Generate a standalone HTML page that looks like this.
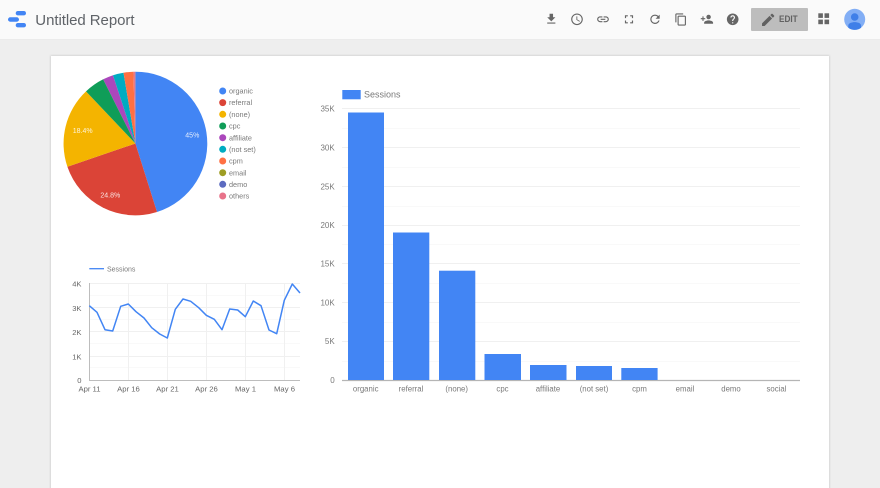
<!DOCTYPE html>
<html><head><meta charset="utf-8"><title>Untitled Report</title>
<style>
html,body{margin:0;padding:0;width:880px;height:488px;overflow:hidden;background:#eeeeee;}
svg{display:block;font-family:"Liberation Sans",sans-serif;filter:blur(.3px);}
</style></head><body>
<svg width="880" height="488" viewBox="0 0 880 488" xmlns="http://www.w3.org/2000/svg">
<defs><filter id="s" x="-2%" y="-2%" width="104%" height="104%"><feGaussianBlur stdDeviation="1"/></filter></defs>
<rect width="880" height="488" fill="#eeeeee"/>
<rect y="0" width="880" height="39" fill="#fafafa"/>
<rect y="39" width="880" height="1" fill="#ebebeb"/>
<!-- logo -->
<rect x="15.7" y="11" width="10.3" height="4.4" rx="2.2" fill="#4285f4"/>
<rect x="8" y="17.3" width="11" height="4.4" rx="2.2" fill="#4285f4"/>
<rect x="15.7" y="23" width="10.3" height="4.4" rx="2.2" fill="#4285f4"/>
<text x="35.300" y="25" font-size="15" letter-spacing="-.06" fill="#5f6368">Untitled Report</text>
<!-- toolbar icons -->
<g fill="#666666">
<g transform="translate(544.3,12) scale(.583)"><path d="M19 9h-4V3H9v6H5l7 7 7-7zM5 18v2h14v-2H5z"/></g>
<g transform="translate(570,12.300) scale(.583)"><path d="M11.99 2C6.47 2 2 6.48 2 12s4.47 10 9.99 10C17.52 22 22 17.52 22 12S17.52 2 11.99 2zM12 20c-4.42 0-8-3.58-8-8s3.58-8 8-8 8 3.58 8 8-3.58 8-8 8zm.5-13H11v6l5.25 3.15.75-1.23-4.5-2.67z"/></g>
<g transform="translate(596,12.300) scale(.583)"><path d="M3.9 12c0-1.71 1.39-3.1 3.1-3.1h4V7H7c-2.76 0-5 2.24-5 5s2.24 5 5 5h4v-1.9H7c-1.71 0-3.1-1.39-3.1-3.1zM8 13h8v-2H8v2zm9-6h-4v1.9h4c1.71 0 3.1 1.39 3.1 3.1s-1.39 3.1-3.1 3.1h-4V17h4c2.76 0 5-2.24 5-5s-2.24-5-5-5z"/></g>
<g transform="translate(622,12.300) scale(.583)"><path d="M7 14H5v5h5v-2H7v-3zm-2-4h2V7h3V5H5v5zm12 7h-3v2h5v-5h-2v3zM14 5v2h3v3h2V5h-5z"/></g>
<g transform="translate(648,12.300) scale(.583)"><path d="M17.65 6.35C16.2 4.9 14.21 4 12 4c-4.42 0-7.99 3.58-7.99 8s3.57 8 7.99 8c3.73 0 6.84-2.55 7.73-6h-2.08c-.82 2.33-3.04 4-5.65 4-3.31 0-6-2.69-6-6s2.69-6 6-6c1.66 0 3.14.69 4.22 1.78L13 11h7V4l-2.35 2.35z"/></g>
<g transform="translate(674.2,12.800) scale(.56)"><path d="M16 1H4c-1.1 0-2 .9-2 2v14h2V3h12V1zm3 4H8c-1.1 0-2 .9-2 2v14c0 1.1.9 2 2 2h11c1.1 0 2-.9 2-2V7c0-1.1-.9-2-2-2zm0 16H8V7h11v14z"/></g>
<g transform="translate(700.2,12.500) scale(.56)"><path d="M15 12c2.21 0 4-1.79 4-4s-1.79-4-4-4-4 1.79-4 4 1.79 4 4 4zm-9-2V7H4v3H1v2h3v3h2v-3h3v-2H6zm9 4c-2.67 0-8 1.34-8 4v2h16v-2c0-2.66-5.33-4-8-4z"/></g>
<g transform="translate(725.7,12.300) scale(.583)"><path d="M12 2C6.48 2 2 6.48 2 12s4.48 10 10 10 10-4.48 10-10S17.52 2 12 2zm1 17h-2v-2h2v2zm2.07-7.75l-.9.92C13.45 12.9 13 13.5 13 15h-2v-.5c0-1.1.45-2.1 1.17-2.83l1.24-1.26c.37-.36.59-.86.59-1.41 0-1.1-.9-2-2-2s-2 .9-2 2H8c0-2.21 1.79-4 4-4s4 1.79 4 4c0 .88-.36 1.68-.93 2.25z"/></g>
</g>
<!-- edit button -->
<rect x="751" y="8" width="57" height="23" rx="1" fill="#bdbdbd"/>
<g transform="translate(760,11.700) scale(.68)" fill="#616161"><path d="M3 17.25V21h3.75L17.81 9.94l-3.75-3.75L3 17.25zM20.71 7.04c.39-.39.39-1.02 0-1.41l-2.34-2.34c-.39-.39-1.02-.39-1.41 0l-1.83 1.83 3.75 3.75 1.83-1.83z"/></g>
<text x="779" y="22" font-size="9" font-weight="700" fill="#616161" textLength="18.700" lengthAdjust="spacingAndGlyphs">EDIT</text>
<!-- apps -->
<g fill="#666666">
<rect x="818.3" y="13.3" width="4.6" height="4.6"/><rect x="824.5" y="13.3" width="4.6" height="4.6"/>
<rect x="818.3" y="19.6" width="4.6" height="4.6"/><rect x="824.5" y="19.6" width="4.6" height="4.6"/>
</g>
<!-- avatar -->
<circle cx="854.7" cy="19.3" r="10.5" fill="#82aef5"/>
<circle cx="854.7" cy="17" r="3.800" fill="#3f7fe8"/>
<path d="M848.300 27.700v-2.200c0-2.400 3.700-3.400 6.400-3.400s6.400 1 6.400 3.400v2.200a10.500 10.500 0 0 1-12.800 0z" fill="#3f7fe8"/>
<!-- card -->
<rect x="50.500" y="55.500" width="779" height="440" fill="#000" opacity=".14" filter="url(#s)"/>
<rect x="51" y="56" width="778" height="440" fill="#ffffff"/>
<!-- pie -->
<g id="pie">
<path d="M135.4 143.5L135.4 71.7A71.8 71.8 0 0 1 157 212z" fill="#4285f4"/>
<path d="M135.4 143.5L157 212A71.8 71.8 0 0 1 67.4 166.7z" fill="#db4437"/>
<path d="M135.4 143.5L67.4 166.7A71.8 71.8 0 0 1 86 91.4z" fill="#f4b400"/>
<path d="M135.4 143.5L86 91.4A71.8 71.8 0 0 1 103.2 79.3z" fill="#0f9d58"/>
<path d="M135.4 143.5L103.2 79.3A71.8 71.8 0 0 1 113 75.2z" fill="#ab47bc"/>
<path d="M135.4 143.5L113 75.2A71.8 71.8 0 0 1 123.5 72.7z" fill="#00acc1"/>
<path d="M135.4 143.5L123.5 72.7A71.8 71.8 0 0 1 133.4 71.7z" fill="#ff7043"/>
<path d="M135.4 143.5L133.4 71.7A71.8 71.8 0 0 1 135.4 71.7z" fill="#e57b8c"/>
</g>
<g font-size="7" fill="#ffffff" text-anchor="middle" fill-opacity=".85">
<text x="192.3" y="137.5">45%</text>
<text x="110.3" y="197.5">24.8%</text>
<text x="82.7" y="133.2">18.4%</text>
</g>
<!-- pie legend -->
<g>
<circle cx="222.7" cy="91" r="3.5" fill="#4285f4"/>
<circle cx="222.7" cy="102.6" r="3.5" fill="#db4437"/>
<circle cx="222.7" cy="114.3" r="3.5" fill="#f4b400"/>
<circle cx="222.7" cy="126" r="3.5" fill="#0f9d58"/>
<circle cx="222.7" cy="137.7" r="3.5" fill="#ab47bc"/>
<circle cx="222.7" cy="149.3" r="3.5" fill="#00acc1"/>
<circle cx="222.7" cy="161" r="3.5" fill="#ff7043"/>
<circle cx="222.7" cy="172.7" r="3.5" fill="#9e9d24"/>
<circle cx="222.7" cy="184.3" r="3.5" fill="#5c6bc0"/>
<circle cx="222.7" cy="196" r="3.5" fill="#e8738a"/>
</g>
<g font-size="7.3" fill="#7a7a7a">
<text x="229" y="93.6">organic</text>
<text x="229" y="105.2">referral</text>
<text x="229" y="116.9">(none)</text>
<text x="229" y="128.6">cpc</text>
<text x="229" y="140.3">affiliate</text>
<text x="229" y="151.9">(not set)</text>
<text x="229" y="163.6">cpm</text>
<text x="229" y="175.3">email</text>
<text x="229" y="186.9">demo</text>
<text x="229" y="198.6">others</text>
</g>
<!-- line chart -->
<g stroke="#f9f9f9" stroke-width="1">
<path d="M89.5 295.5H300M89.5 319.5H300M89.5 343.5H300M89.5 367.5H300"/>
</g>
<g stroke="#f0f0f0" stroke-width="1">
<path d="M89.5 283.5H300M89.5 307.5H300M89.5 331.5H300M89.5 356.5H300"/>
<path d="M128.5 283V380M167.5 283V380M206.5 283V380M245.5 283V380M284.5 283V380"/>
</g>
<path d="M89.5 283V380.5H300" fill="none" stroke="#bdbdbd" stroke-width="1"/>
<polyline fill="none" stroke="#4285f4" stroke-width="1.500" stroke-linejoin="round" points="89.3,305.7 97,312.3 105,329.7 112.7,331 120.7,306.3 128.3,304 136,311.7 144,318 151.7,327.7 159.7,334 167.3,338 175.3,309.3 183,299 190.7,301.3 198.7,307.7 206.3,315.3 214.3,319.3 222,329.7 229.7,309 237.7,310 245.3,316.7 253.3,301 261,305.7 269,330 276.7,333.7 284.3,300.3 292.3,284 300,293"/>
<path d="M89.3 268.7H104" stroke="#4285f4" stroke-width="1.300"/>
<text x="107" y="271.3" font-size="7" fill="#7a7a7a">Sessions</text>
<g font-size="7.600" fill="#666666" text-anchor="end">
<text x="81.5" y="286.700">4K</text>
<text x="81.5" y="310.800">3K</text>
<text x="81.5" y="335">2K</text>
<text x="81.5" y="359.300">1K</text>
<text x="81.5" y="383.200">0</text>
</g>
<g font-size="7.7" fill="#666666" text-anchor="middle">
<text x="89.5" y="391.5">Apr 11</text>
<text x="128.5" y="391.5">Apr 16</text>
<text x="167.5" y="391.5">Apr 21</text>
<text x="206.5" y="391.5">Apr 26</text>
<text x="245.5" y="391.5">May 1</text>
<text x="284.5" y="391.5">May 6</text>
</g>
<!-- bar chart -->
<g stroke="#f9f9f9" stroke-width="1">
<path d="M342 128.500H800M342 167.500H800M342 206.500H800M342 244.500H800M342 283.500H800M342 322.500H800M342 361.500H800"/>
</g>
<g stroke="#f0f0f0" stroke-width="1">
<path d="M342 108.500H800M342 147.500H800M342 186.500H800M342 225.500H800M342 263.500H800M342 302.500H800M342 341.500H800"/>
</g>
<path d="M342 380.500H800" stroke="#b5b5b5" stroke-width="1.200"/>
<g fill="#4285f4">
<rect x="348" y="112.500" width="36" height="267.500"/>
<rect x="393" y="232.500" width="36.300" height="147.500"/>
<rect x="439" y="270.700" width="36.300" height="109.300"/>
<rect x="484.500" y="354" width="36.500" height="26"/>
<rect x="530" y="365" width="36.500" height="15"/>
<rect x="576" y="366" width="36" height="14"/>
<rect x="621.300" y="368" width="36.300" height="12"/>
<rect x="342.300" y="90" width="18.400" height="9.300"/>
</g>
<text x="364" y="97.700" font-size="9" fill="#7a7a7a">Sessions</text>
<g font-size="8" fill="#7a7a7a" text-anchor="end">
<text x="334.700" y="111.300">35K</text>
<text x="334.700" y="150.300">30K</text>
<text x="334.700" y="189.300">25K</text>
<text x="334.700" y="228">20K</text>
<text x="334.700" y="266.500">15K</text>
<text x="334.700" y="305.300">10K</text>
<text x="334.700" y="344">5K</text>
<text x="334.700" y="383">0</text>
</g>
<g font-size="7.800" fill="#7a7a7a" text-anchor="middle">
<text x="365.700" y="391.500">organic</text>
<text x="411" y="391.500">referral</text>
<text x="456.700" y="391.500">(none)</text>
<text x="502.500" y="391.500">cpc</text>
<text x="548" y="391.500">affiliate</text>
<text x="594" y="391.500">(not set)</text>
<text x="639.500" y="391.500">cpm</text>
<text x="685" y="391.500">email</text>
<text x="731" y="391.500">demo</text>
<text x="776.500" y="391.500">social</text>
</g>
</svg>
</body></html>
